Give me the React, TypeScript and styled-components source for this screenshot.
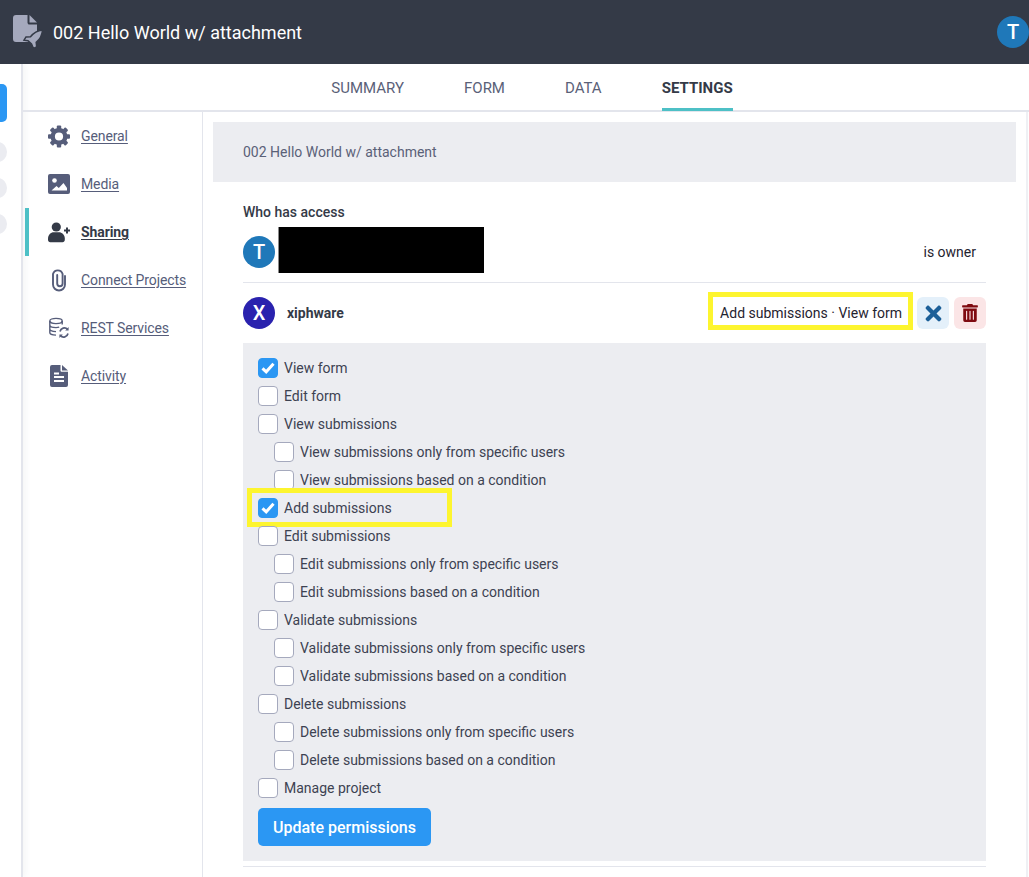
import React from "react";
import styled, { createGlobalStyle } from "styled-components";
import { FaTimes, FaTrashAlt } from "react-icons/fa";

const GlobalStyle = createGlobalStyle`
  html, body {
    margin: 0;
    padding: 0;
    height: 877px;
    overflow: hidden;
    background: #fff;
    font-family: Roboto, "Liberation Sans", sans-serif;
  }
`;

const Page = styled.div`
  width: 1029px;
  height: 877px;
  display: flex;
  flex-direction: column;
  overflow: hidden;
`;

const Header = styled.header`
  height: 64px;
  flex: none;
  background: #343a47;
  display: flex;
  align-items: center;
  padding: 0 0 0 13px;
  color: #fff;
`;

const Title = styled.div`
  margin-left: 10px;
  font-size: 18px;
  flex: 1;
`;

const Avatar = styled.div<{ $bg: string }>`
  width: 32px;
  height: 32px;
  border-radius: 50%;
  background: ${(p) => p.$bg};
  color: #fff;
  display: flex;
  align-items: center;
  justify-content: center;
  flex: none;
  font-size: 20px;
  font-weight: 500;
`;

const Body = styled.div`
  flex: 1;
  display: flex;
  min-height: 0;
`;

const Rail = styled.div`
  width: 21px;
  flex: none;
  border-right: 2px solid #e3e5ec;
  box-shadow: 3px 0 6px rgba(60, 70, 90, 0.05);
  padding-top: 20px;
  display: flex;
  flex-direction: column;
  align-items: flex-start;
`;

const RailActive = styled.div`
  width: 7px;
  height: 38px;
  background: #2b97f3;
  border-radius: 0 5px 5px 0;
  margin-bottom: 20px;
`;

const RailDot = styled.div`
  width: 18px;
  height: 20px;
  margin: 0 0 16px -11px;
  border-radius: 50%;
  background: #ebecf1;
`;

const Main = styled.div`
  flex: 1;
  display: flex;
  flex-direction: column;
  min-width: 0;
`;

const Tabs = styled.nav`
  height: 46px;
  flex: none;
  border-bottom: 2px solid #e3e5ec;
  display: flex;
  align-items: flex-start;
  justify-content: center;
  gap: 60px;
  padding-left: 12px;
`;

const Tab = styled.div<{ $active?: boolean }>`
  height: 47px;
  box-sizing: border-box;
  padding-top: 15px;
  font-size: 15px;
  line-height: 18px;
  font-weight: ${(p) => (p.$active ? 700 : 400)};
  color: ${(p) => (p.$active ? "#343a47" : "#5a6178")};
  border-bottom: 3px solid ${(p) => (p.$active ? "#4dc0c6" : "transparent")};
`;

const Columns = styled.div`
  flex: 1;
  display: flex;
  min-height: 0;
`;

const Sidebar = styled.aside`
  width: 179px;
  flex: none;
  border-right: 1px solid #e3e5ec;
`;

const SideItem = styled.div<{ $active?: boolean }>`
  height: 48px;
  margin-left: 2px;
  padding-left: 19px;
  border-left: 4px solid ${(p) => (p.$active ? "#4dc0c6" : "transparent")};
  display: flex;
  align-items: center;
  color: ${(p) => (p.$active ? "#343a47" : "#565d7a")};
`;

const SideIcon = styled.span`
  width: 22px;
  height: 24px;
  margin-right: 11px;
  display: flex;
  align-items: center;
  justify-content: center;
`;

const SideLabel = styled.span<{ $active?: boolean }>`
  font-size: 14px;
  letter-spacing: -0.1px;
  text-decoration: underline;
  text-underline-offset: 2px;
  font-weight: ${(p) => (p.$active ? 700 : 400)};
`;

const Content = styled.main`
  flex: 1;
  min-width: 0;
  padding: 10px 13px 0 10px;
  position: relative;

  &::after {
    content: "";
    position: absolute;
    top: 0;
    bottom: 0;
    right: 1px;
    width: 2px;
    background: #eff0f4;
  }
`;

const FormName = styled.div`
  height: 60px;
  background: #ecedf1;
  padding-left: 30px;
  display: flex;
  align-items: center;
  font-size: 14px;
  color: #5a6178;
`;

const Sharing = styled.section`
  padding: 22px 30px 0;
`;

const AccessHeading = styled.div`
  height: 16px;
  font-size: 14px;
  line-height: 16px;
  font-weight: 500;
  color: #343a47;
`;

const OwnerRow = styled.div`
  height: 63px;
  box-sizing: border-box;
  padding-top: 2px;
  border-bottom: 1px solid #e3e5ec;
  display: flex;
  align-items: center;
`;

const Redaction = styled.div`
  width: 206px;
  height: 46px;
  box-sizing: border-box;
  margin: 0 0 4px 3px;
  background: #000;
  border-left: 1px solid #8a8a8a;
`;

const OwnerRole = styled.div`
  margin-left: auto;
  margin-right: 10px;
  font-size: 14px;
  color: #1f2330;
`;

const UserRow = styled.div`
  height: 60px;
  display: flex;
  align-items: center;
`;

const UserName = styled.div`
  margin-left: 12px;
  font-size: 14px;
  font-weight: 700;
  color: #343a47;
  flex: 1;
`;

const Highlight = styled.div`
  border: 5px solid #fdf52f;
  height: 38px;
  box-sizing: border-box;
  margin: 0 -1px 4px 0;
  padding: 4px 6px 0 7px;
  display: flex;
  align-items: center;
  font-size: 14px;
  color: #1f2330;
  white-space: nowrap;
`;

const IconButton = styled.button<{ $bg: string; $fg: string }>`
  width: 32px;
  height: 32px;
  margin-left: 5px;
  border: 0;
  padding: 0;
  border-radius: 6px;
  background: ${(p) => p.$bg};
  color: ${(p) => p.$fg};
  display: flex;
  align-items: center;
  justify-content: center;
`;

const Permissions = styled.div`
  background: #ecedf1;
  padding: 11px 15px 15px;
  margin-bottom: 5px;
`;

const Row = styled.label<{ $sub?: boolean }>`
  height: 28px;
  display: flex;
  align-items: center;
  position: relative;
  padding-left: ${(p) => (p.$sub ? 16 : 0)}px;
  font-size: 14px;
  color: #3d4252;
`;

const Box = styled.span<{ $on?: boolean }>`
  width: 20px;
  height: 20px;
  box-sizing: border-box;
  margin-right: 6px;
  border-radius: 4px;
  flex: none;
  background: ${(p) => (p.$on ? "#2b97f3" : "#fff")};
  border: 1px solid ${(p) => (p.$on ? "#2b97f3" : "#a5a9bd")};
  display: flex;
  align-items: center;
  justify-content: center;
`;

const RowMark = styled.span`
  position: absolute;
  left: -11px;
  top: -6px;
  width: 205px;
  height: 39px;
  box-sizing: border-box;
  border: 5px solid #fdf52f;
  pointer-events: none;
`;

const UpdateButton = styled.button`
  display: block;
  width: 173px;
  height: 38px;
  margin-top: 6px;
  border: 0;
  border-radius: 5px;
  background: #2b97f3;
  color: #fff;
  font-family: inherit;
  font-size: 16px;
  font-weight: 500;
`;

const Divider = styled.div`
  height: 1px;
  background: #e3e5ec;
`;

const GearIcon = () => (
  <svg width="22" height="23" viewBox="0 0 22 22" fill="currentColor">
    <circle cx="11" cy="11" r="6.300" fill="none" stroke="currentColor" strokeWidth="4.400" />
    {[0, 45, 90, 135, 180, 225, 270, 315].map((deg) => (
      <rect key={deg} x="8.800" y="0" width="4.400" height="4.500" rx="1" transform={`rotate(${deg} 11 11)`} />
    ))}
  </svg>
);

const MediaIcon = () => (
  <svg width="22" height="20" viewBox="0 0 22 20">
    <rect width="22" height="20" rx="2" fill="currentColor" />
    <circle cx="6.500" cy="6.500" r="2.300" fill="#fff" />
    <path d="M3.500 16.500l5-4.500 2.300 2 4.700-5 3.500 5v2.500z" fill="#fff" />
  </svg>
);

const SharingIcon = () => (
  <svg width="22" height="21" viewBox="0 0 22 21" fill="currentColor">
    <circle cx="8.300" cy="5" r="4.600" />
    <path d="M0 18v-1.500C0 13 2.800 10.300 5.800 10.300h5c3.200 0 6 2.700 6 6.200V18c0 1.200-1 2.200-2.200 2.200H2.200C1 20.200 0 19.200 0 18z" />
    <path d="M16 7.500h2v-2h2v2h2v2h-2v2h-2v-2h-2z" />
  </svg>
);

const ClipIcon = () => (
  <svg width="14" height="24" viewBox="0 0 14 24" fill="none" stroke="currentColor" strokeWidth="1.900" strokeLinecap="round">
    <path d="M13 8v8.500a6 6 0 0 1-12 0V6a5 5 0 0 1 9.600 0v9.500a2.700 2.700 0 0 1-5.400 0V7" />
  </svg>
);

const RestIcon = () => (
  <svg width="22" height="22" viewBox="0 0 22 22" fill="none" stroke="currentColor" strokeWidth="1.400">
    <ellipse cx="8" cy="4" rx="6.200" ry="2.600" />
    <path d="M1.800 4v11.500c0 1.400 2.400 2.500 6.200 2.600M14.200 4v3.500M1.800 8c0 1.400 2.800 2.600 6.200 2.600 1.200 0 2.200-.1 3.200-.4M1.800 12c0 1.400 2.800 2.500 6.200 2.600" />
    <path d="M12 14.500a4.500 4.500 0 0 1 7.600-2.200M20 16.500a4.500 4.500 0 0 1-7.600 2.200" strokeWidth="1.700" />
    <path d="M20.600 10v3.400h-3.400zM11.400 21v-3.400h3.400z" fill="currentColor" stroke="none" />
  </svg>
);

const FileIcon = () => (
  <svg width="18" height="22" viewBox="0 0 18 22">
    <path d="M2 0h8.500v5.500c0 .8.500 1.300 1.300 1.300H18V20a2 2 0 0 1-2 2H2a2 2 0 0 1-2-2V2a2 2 0 0 1 2-2z" fill="currentColor" />
    <path d="M12 0l6 5.500h-6z" fill="currentColor" />
    <path d="M4 7.500h5v2H4zM4 11h10v2H4zM4 15h10v2H4z" fill="#fff" />
  </svg>
);

const Logo = () => (
  <svg width="30" height="34" viewBox="0 0 30 34" fill="#a5a9bd">
    <path d="M3 0h11.500v7.500c0 1.300.8 2.100 2 2.100H24V24c0 2-1 3-3 3H3c-2 0-3-1-3-3V3c0-2 1-3 3-3z" />
    <path d="M16.500 0L24 7.600h-7.500z" />
    <path
      d="M29.500 15c-.3 5-2.500 9.200-6.300 12.300l.5 4.500-3.200 1.700-2-4.500-3.500-3.200-4-.6 2-3.300 4.500-.2c3-3.700 7-6 12-6.700z"
      stroke="#343a47"
      strokeWidth="1.500"
    />
  </svg>
);

const Check = () => (
  <svg width="14" height="12" viewBox="0 0 14 12">
    <path d="M1.500 6.300l3.700 3.500 7.300-8" fill="none" stroke="#fff" strokeWidth="3" />
  </svg>
);

const sideItems = [
  { label: "General", icon: <GearIcon /> },
  { label: "Media", icon: <MediaIcon /> },
  { label: "Sharing", icon: <SharingIcon />, active: true },
  { label: "Connect Projects", icon: <ClipIcon /> },
  { label: "REST Services", icon: <RestIcon /> },
  { label: "Activity", icon: <FileIcon /> },
];

const permissions = [
  { label: "View form", on: true },
  { label: "Edit form" },
  { label: "View submissions" },
  { label: "View submissions only from specific users", sub: true },
  { label: "View submissions based on a condition", sub: true },
  { label: "Add submissions", on: true, marked: true },
  { label: "Edit submissions" },
  { label: "Edit submissions only from specific users", sub: true },
  { label: "Edit submissions based on a condition", sub: true },
  { label: "Validate submissions" },
  { label: "Validate submissions only from specific users", sub: true },
  { label: "Validate submissions based on a condition", sub: true },
  { label: "Delete submissions" },
  { label: "Delete submissions only from specific users", sub: true },
  { label: "Delete submissions based on a condition", sub: true },
  { label: "Manage project" },
];

export default function App() {
  return (
    <Page>
      <GlobalStyle />
      <Header>
        <Logo />
        <Title>002 Hello World w/ attachment</Title>
        <Avatar $bg="#1f78b9">T</Avatar>
      </Header>
      <Body>
        <Rail>
          <RailActive />
          <RailDot />
          <RailDot />
          <RailDot />
        </Rail>
        <Main>
          <Tabs>
            <Tab>SUMMARY</Tab>
            <Tab>FORM</Tab>
            <Tab>DATA</Tab>
            <Tab $active>SETTINGS</Tab>
          </Tabs>
          <Columns>
            <Sidebar>
              {sideItems.map((item) => (
                <SideItem key={item.label} $active={item.active}>
                  <SideIcon>{item.icon}</SideIcon>
                  <SideLabel $active={item.active}>{item.label}</SideLabel>
                </SideItem>
              ))}
            </Sidebar>
            <Content>
              <FormName>002 Hello World w/ attachment</FormName>
              <Sharing>
                <AccessHeading>Who has access</AccessHeading>
                <OwnerRow>
                  <Avatar $bg="#1f78b9">T</Avatar>
                  <Redaction />
                  <OwnerRole>is owner</OwnerRole>
                </OwnerRow>
                <UserRow>
                  <Avatar $bg="#2a22ae">X</Avatar>
                  <UserName>xiphware</UserName>
                  <Highlight>Add submissions · View form</Highlight>
                  <IconButton $bg="#e4f0fa" $fg="#1c5f98">
                    <FaTimes size={23} />
                  </IconButton>
                  <IconButton $bg="#fbe5e6" $fg="#7f0a10">
                    <FaTrashAlt size={18} />
                  </IconButton>
                </UserRow>
                <Permissions>
                  {permissions.map((perm) => (
                    <Row key={perm.label} $sub={perm.sub}>
                      {perm.marked && <RowMark />}
                      <Box $on={perm.on}>{perm.on && <Check />}</Box>
                      {perm.label}
                    </Row>
                  ))}
                  <UpdateButton>Update permissions</UpdateButton>
                </Permissions>
                <Divider />
              </Sharing>
            </Content>
          </Columns>
        </Main>
      </Body>
    </Page>
  );
}
